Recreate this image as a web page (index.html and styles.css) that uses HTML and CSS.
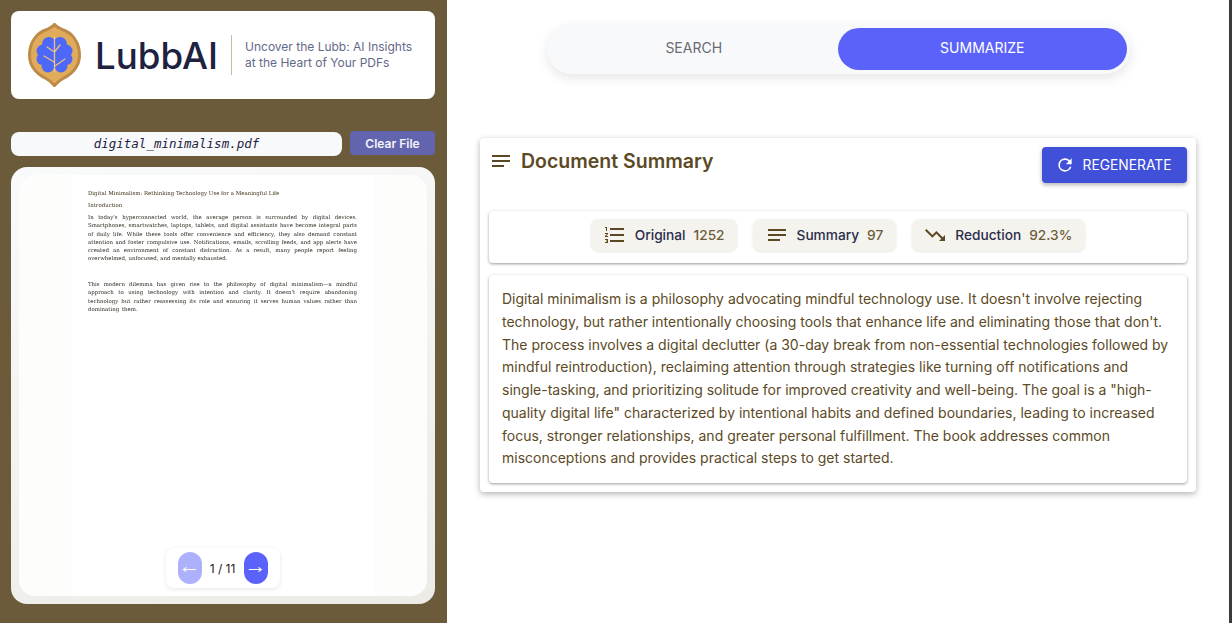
FILE: index.html
```html
<!DOCTYPE html>
<html lang="en">
<head>
<meta charset="UTF-8">
<meta name="viewport" content="width=device-width, initial-scale=1.0">
<title>LubbAI</title>
<link rel="stylesheet" href="styles.css">
</head>
<body>

<div class="app">
    <aside class="sidebar">
        <div class="brand">
            <svg class="brand-logo" width="53" height="64" viewBox="0 0 53 64">
                <path d="M26.5 1.500 C28 3.500 31 5 34 6.500 C44 9.500 51.500 19 51.500 32 C51.500 44 44 51 35 55.500 C31 57.500 29 59.500 26.500 62.500 C24 59.500 22 57.500 18 55.500 C9 51 1.500 44 1.500 32 C1.500 19 9 9.500 19 6.500 C22 5 25 3.500 26.500 1.500 Z" fill="#e0ac5c" stroke="#bd8a48" stroke-width="3"/>
                <g fill="#4d68f8">
                    <circle cx="21" cy="21" r="7"/>
                    <circle cx="32" cy="21" r="7"/>
                    <circle cx="15" cy="28" r="6.500"/>
                    <circle cx="38" cy="28" r="6.500"/>
                    <circle cx="14.500" cy="36" r="6"/>
                    <circle cx="38.500" cy="36" r="6"/>
                    <circle cx="20" cy="43" r="6.500"/>
                    <circle cx="33" cy="43" r="6.500"/>
                    <rect x="18" y="20" width="17" height="24"/>
                </g>
                <path d="M26.500 14 V49 M26.500 29 L19 24 M26.500 29 L32 22 M26 39 L16 33 M27 43 L37 36" fill="none" stroke="#e9c27d" stroke-width="1.300" stroke-linecap="round"/>
            </svg>
            <span class="brand-name">LubbAI</span>
            <span class="brand-line"></span>
            <p class="brand-tag">Uncover the Lubb: AI Insights at the Heart of Your PDFs</p>
        </div>

        <div class="file-row">
            <div class="file-name">digital_minimalism.pdf</div>
            <button class="clear-btn">Clear File</button>
        </div>

        <div class="viewer">
            <div class="page">
                <div class="pdf-text">
                    <p class="pdf-title">Digital Minimalism: Rethinking Technology Use for a Meaningful Life</p>
                    <p class="pdf-title">Introduction</p>
                    <p>In today's hyperconnected world, the average person is surrounded by digital devices. Smartphones, smartwatches, laptops, tablets, and digital assistants have become integral parts of daily life. While these tools offer convenience and efficiency, they also demand constant attention and foster compulsive use. Notifications, emails, scrolling feeds, and app alerts have created an environment of constant distraction. As a result, many people report feeling overwhelmed, unfocused, and mentally exhausted.</p>
                    <p class="pdf-gap">This modern dilemma has given rise to the philosophy of digital minimalism—a mindful approach to using technology with intention and clarity. It doesn't require abandoning technology but rather reassessing its role and ensuring it serves human values rather than dominating them.</p>
                </div>
                <div class="pager">
                    <button class="page-btn off">←</button>
                    <span class="page-num">1 / 11</span>
                    <button class="page-btn">→</button>
                </div>
            </div>
        </div>
    </aside>

    <main class="content">
        <div class="tabs">
            <button class="tab">SEARCH</button>
            <button class="tab active">SUMMARIZE</button>
        </div>

        <section class="card">
            <div class="card-head">
                <div class="card-title">
                    <svg class="icon" width="24" height="24" viewBox="0 0 24 24"><path d="M3 6h18v2H3zM3 11h18v2H3zM3 16h12v2H3z" fill="#5c4822"/></svg>
                    <h2>Document Summary</h2>
                </div>
                <button class="regen">
                    <svg width="20" height="20" viewBox="0 0 24 24"><path d="M17.650 6.350A7.958 7.958 0 0 0 12 4a8 8 0 1 0 7.730 10h-2.080A6 6 0 1 1 12 6c1.660 0 3.140.690 4.220 1.780L13 11h7V4l-2.350 2.350z" fill="#fff"/></svg>
                    REGENERATE
                </button>
            </div>

            <div class="stats">
                <div class="chip">
                    <svg width="24" height="24" viewBox="0 0 24 24"><path d="M2 17h2v.5H3v1h1v.5H2v1h3v-4H2v1zm1-9h1V4H2v1h1v3zm-1 3h1.800L2 13.100v.9h3v-1H3.200L5 10.900V10H2v1zm5-6v2h14V5H7zm0 14h14v-2H7v2zm0-6h14v-2H7v2z" fill="#5c4822"/></svg>
                    <span class="chip-label">Original</span>
                    <span class="chip-value">1252</span>
                </div>
                <div class="chip">
                    <svg width="24" height="24" viewBox="0 0 24 24"><path d="M3 6h18v2H3zM3 11h18v2H3zM3 16h12v2H3z" fill="#5c4822"/></svg>
                    <span class="chip-label">Summary</span>
                    <span class="chip-value">97</span>
                </div>
                <div class="chip">
                    <svg width="24" height="24" viewBox="0 0 24 24"><path d="M16 18l2.290-2.290-4.880-4.880-4 4L2 7.410 3.410 6l6 6 4-4 6.300 6.290L22 12v6z" fill="#5c4822"/></svg>
                    <span class="chip-label">Reduction</span>
                    <span class="chip-value">92.3%</span>
                </div>
            </div>

            <div class="summary">
                Digital minimalism is a philosophy advocating mindful technology use. It doesn't involve rejecting technology, but rather intentionally choosing tools that enhance life and eliminating those that don't. The process involves a digital declutter (a 30-day break from non-essential technologies followed by mindful reintroduction), reclaiming attention through strategies like turning off notifications and single-tasking, and prioritizing solitude for improved creativity and well-being. The goal is a "high-quality digital life" characterized by intentional habits and defined boundaries, leading to increased focus, stronger relationships, and greater personal fulfillment. The book addresses common misconceptions and provides practical steps to get started.
            </div>
        </section>
    </main>

    <div class="window-edge"></div>
</div>

</body>
</html>
```

FILE: styles.css
```css
* {
    box-sizing: border-box;
}

body {
    margin: 0;
    background-color: #ffffff;
    font-family: Inter, sans-serif;
    overflow: hidden;
}

button {
    border: none;
    font-family: inherit;
    cursor: pointer;
}

.app {
    display: flex;
    height: 623px;
}

.window-edge {
    width: 3px;
    flex-shrink: 0;
    background-color: #3a3a3e;
}

/* left column */
.sidebar {
    width: 447px;
    flex-shrink: 0;
    padding: 11px 12px 19px 11px;
    background-color: #6b5b3b;
    display: flex;
    flex-direction: column;
}

.brand {
    height: 88px;
    padding-left: 17px;
    background-color: #ffffff;
    border-radius: 8px;
    display: flex;
    align-items: center;
}

.brand-logo {
    flex-shrink: 0;
}

.brand-name {
    width: 122px;
    margin-left: 14px;
    font-size: 36.700px;
    font-weight: 500;
    white-space: nowrap;
    color: #1e2140;
}

.brand-line {
    width: 1px;
    height: 40px;
    margin: 0 13px 0 14px;
    background-color: #c9baa3;
}

.brand-tag {
    margin: 0;
    width: 180px;
    font-size: 12px;
    line-height: 16px;
    color: #64688a;
}

.file-row {
    margin-top: 32px;
    display: flex;
    align-items: flex-start;
    gap: 8px;
}

.file-name {
    flex: 1;
    height: 24px;
    margin-top: 1px;
    background-color: #f8f9fb;
    border-radius: 8px;
    font-family: "DejaVu Sans Mono", monospace;
    font-style: italic;
    font-size: 12.500px;
    line-height: 23px;
    text-align: center;
    color: #1e2140;
}

.clear-btn {
    width: 85px;
    height: 24px;
    background-color: #6265ae;
    border-radius: 4px;
    color: #f3f3fa;
    font-size: 12px;
    font-weight: 600;
}

.viewer {
    flex: 1;
    margin-top: 11px;
    padding: 8px;
    background-image: linear-gradient(160deg, #f9fafb, #ecebe6);
    border-radius: 16px;
    display: flex;
}

.page {
    flex: 1;
    padding: 14px 70px 0 69px;
    background-color: #fdfdfc;
    background-image: linear-gradient(to right, #fdfdfc 13%, #ffffff 13%, #ffffff 87%, #fdfdfc 87%);
    border-radius: 16px;
    display: flex;
    flex-direction: column;
}

.pdf-text {
    flex: 1;
    font-family: "DejaVu Serif", serif;
    font-size: 5.430px;
    line-height: 8.150px;
    color: #2e2a20;
    filter: blur(0.25px);
}

.pdf-text p {
    margin: 0 0 4px;
    text-align: justify;
}

.pdf-text .pdf-title {
    margin-bottom: 4px;
    text-align: left;
    color: #3e3218;
}

.pdf-text .pdf-gap {
    margin-top: 18px;
    word-spacing: 1px;
}

.pager {
    align-self: center;
    margin-bottom: 8px;
    width: 114px;
    height: 40px;
    padding: 0 12px;
    background-color: #ffffff;
    border-radius: 8px;
    box-shadow: 0 1px 4px rgba(0, 0, 0, 0.1);
    display: flex;
    align-items: center;
    justify-content: space-between;
}

.page-btn {
    width: 24px;
    height: 32px;
    padding: 0 0 5px;
    background-color: #5a62fa;
    border-radius: 12px;
    color: #ffffff;
    font-family: "Liberation Sans", sans-serif;
    font-size: 22px;
}

.page-btn.off {
    background-color: #adb0fb;
}

.page-num {
    font-size: 12px;
    color: #1c1c24;
}

/* right side */
.content {
    flex: 1;
    padding-top: 24px;
    display: flex;
    flex-direction: column;
    align-items: center;
}

.tabs {
    width: 583px;
    height: 50px;
    padding: 4px 3px 4px 3px;
    background-color: #f8f9fb;
    border-radius: 25px;
    box-shadow: 0 4px 12px rgba(0, 0, 0, 0.1);
    display: flex;
}

.tab {
    flex: 1;
    padding-bottom: 4px;
    background: none;
    border-radius: 21px;
    font-size: 14px;
    color: #6a6a72;
}

.tab.active {
    background-color: #5a62fa;
    color: #ffffff;
}

.card {
    width: 716px;
    height: 354px;
    margin-top: 64px;
    padding: 9px;
    background-color: #ffffff;
    border-radius: 4px;
    box-shadow: 0 2px 6px rgba(0, 0, 0, 0.3);
}

.card-head {
    height: 64px;
    display: flex;
    justify-content: space-between;
    align-items: flex-start;
}

.card-title {
    display: flex;
    align-items: center;
    gap: 8px;
    margin-top: 2px;
}

.card-title h2 {
    margin: 0;
    font-size: 19.500px;
    font-weight: 600;
    color: #5c4a26;
}

.regen {
    width: 145px;
    height: 36px;
    padding: 0 3px 1px 0;
    background-color: #4050d8;
    border-radius: 4px;
    box-shadow: 0 2px 4px rgba(0, 0, 0, 0.3);
    color: #ffffff;
    font-size: 13.800px;
    display: flex;
    align-items: center;
    justify-content: center;
    gap: 8px;
}

.stats {
    height: 52px;
    padding-top: 8px;
    background-color: #ffffff;
    border-radius: 4px;
    box-shadow: 0 1px 3px rgba(0, 0, 0, 0.4);
    display: flex;
    justify-content: center;
    align-items: flex-start;
    gap: 16px;
}

.chip {
    height: 32px;
    padding: 0 12.500px 0 11.500px;
    background-color: #f5f3ee;
    border-radius: 8px;
    box-shadow: 0 1px 3px rgba(0, 0, 0, 0.1);
    display: flex;
    align-items: center;
    font-size: 13.700px;
    font-weight: 550;
}

.chip-label {
    margin-left: 8px;
    color: #2a2d4a;
}

.chip-value {
    margin-left: 8px;
    color: #6b5b3b;
}

.summary {
    height: 208px;
    margin-top: 12px;
    padding: 13px 13px;
    background-color: #ffffff;
    border-radius: 4px;
    box-shadow: 0 1px 3px rgba(0, 0, 0, 0.4);
    font-size: 14px;
    line-height: 22.750px;
    color: #5c4a26;
}
```
